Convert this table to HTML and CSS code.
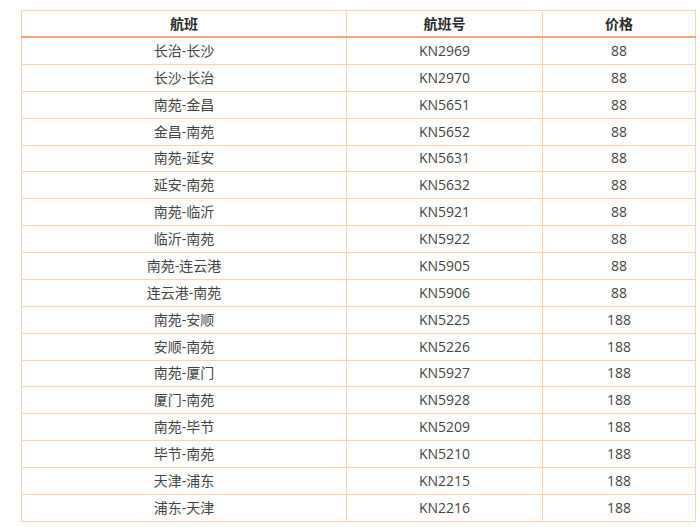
FILE: index.html
```html
<!DOCTYPE html>
<html lang="zh-CN">
<head>
<meta charset="utf-8">
<title>航班</title>
<link rel="stylesheet" href="styles.css">
</head>
<body>
<table class="flights">
  <colgroup>
    <col class="c-route">
    <col class="c-no">
    <col class="c-price">
  </colgroup>
  <thead>
    <tr><th>航班</th><th>航班号</th><th>价格</th></tr>
  </thead>
  <tbody>
    <tr><td>长治-长沙</td><td>KN2969</td><td>88</td></tr>
    <tr><td>长沙-长治</td><td>KN2970</td><td>88</td></tr>
    <tr><td>南苑-金昌</td><td>KN5651</td><td>88</td></tr>
    <tr><td>金昌-南苑</td><td>KN5652</td><td>88</td></tr>
    <tr><td>南苑-延安</td><td>KN5631</td><td>88</td></tr>
    <tr><td>延安-南苑</td><td>KN5632</td><td>88</td></tr>
    <tr><td>南苑-临沂</td><td>KN5921</td><td>88</td></tr>
    <tr><td>临沂-南苑</td><td>KN5922</td><td>88</td></tr>
    <tr><td>南苑-连云港</td><td>KN5905</td><td>88</td></tr>
    <tr><td>连云港-南苑</td><td>KN5906</td><td>88</td></tr>
    <tr><td>南苑-安顺</td><td>KN5225</td><td>188</td></tr>
    <tr><td>安顺-南苑</td><td>KN5226</td><td>188</td></tr>
    <tr><td>南苑-厦门</td><td>KN5927</td><td>188</td></tr>
    <tr><td>厦门-南苑</td><td>KN5928</td><td>188</td></tr>
    <tr><td>南苑-毕节</td><td>KN5209</td><td>188</td></tr>
    <tr><td>毕节-南苑</td><td>KN5210</td><td>188</td></tr>
    <tr><td>天津-浦东</td><td>KN2215</td><td>188</td></tr>
    <tr><td>浦东-天津</td><td>KN2216</td><td>188</td></tr>
  </tbody>
</table>
</body>
</html>
```
FILE: styles.css
```css
html, body {
  margin: 0;
  padding: 0;
  background: #ffffff;
}

body {
  padding: 10px 0 0 21px;
  font-family: "Open Sans", "Noto Sans CJK SC", sans-serif;
  font-size: 14px;
  color: #333333;
}

.flights {
  border-collapse: collapse;
  table-layout: fixed;
  width: 674px;
}

.c-route { width: 325px; }
.c-no { width: 196px; }
.c-price { width: 153px; }

.flights th,
.flights td {
  border: 1px solid #fbd3b4;
  text-align: center;
  padding: 0;
  line-height: 20px;
}

.flights th {
  height: 25px;
  font-weight: bold;
  color: #2b2b2b;
  border-bottom: 2px solid #f3a57c;
}

.flights td {
  height: 25.88px;
  color: #444444;
}
```
